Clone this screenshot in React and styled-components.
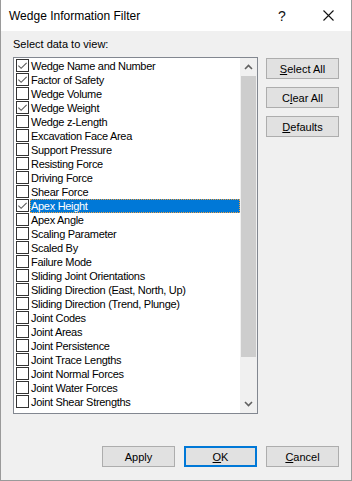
import React, { useState } from "react";
import styled, { createGlobalStyle } from "styled-components";

const items = [
  { id: 0, title: "Wedge Name and Number", checked: true },
  { id: 1, title: "Factor of Safety", checked: true },
  { id: 2, title: "Wedge Volume" },
  { id: 3, title: "Wedge Weight", checked: true },
  { id: 4, title: "Wedge z-Length" },
  { id: 5, title: "Excavation Face Area" },
  { id: 6, title: "Support Pressure" },
  { id: 7, title: "Resisting Force" },
  { id: 8, title: "Driving Force" },
  { id: 9, title: "Shear Force" },
  { id: 10, title: "Apex Height", checked: true },
  { id: 11, title: "Apex Angle" },
  { id: 12, title: "Scaling Parameter" },
  { id: 13, title: "Scaled By" },
  { id: 14, title: "Failure Mode" },
  { id: 15, title: "Sliding Joint Orientations" },
  { id: 16, title: "Sliding Direction (East, North, Up)" },
  { id: 17, title: "Sliding Direction (Trend, Plunge)" },
  { id: 18, title: "Joint Codes" },
  { id: 19, title: "Joint Areas" },
  { id: 20, title: "Joint Persistence" },
  { id: 21, title: "Joint Trace Lengths" },
  { id: 22, title: "Joint Normal Forces" },
  { id: 23, title: "Joint Water Forces" },
  { id: 24, title: "Joint Shear Strengths" },
];

const GlobalStyle = createGlobalStyle`
  html, body {
    margin: 0;
    padding: 0;
    background: #ffffff;
  }
  * {
    box-sizing: border-box;
  }
`;

const App = () => {
  const [list, setList] = useState(items);
  const [selected, setSelected] = useState(10);

  const toggle = (id) => {
    setSelected(id);
    setList((prev) =>
      prev.map((item) =>
        item.id === id ? { ...item, checked: !item.checked } : item
      )
    );
  };

  return (
    <>
      <GlobalStyle />
      <StyledWindow>
        <StyledTitleBar>
          <StyledTitle>Wedge Information Filter</StyledTitle>
          <StyledCaptionButton>?</StyledCaptionButton>
          <StyledCaptionButton>
            <svg width="11" height="11" viewBox="0 0 11 11">
              <path d="M0.5 0.5 L10.5 10.5 M10.5 0.5 L0.5 10.5" stroke="#111" strokeWidth="1.1" fill="none" />
            </svg>
          </StyledCaptionButton>
        </StyledTitleBar>
        <StyledBody>
          <StyledLabel>Select data to view:</StyledLabel>
          <StyledMain>
            <StyledList>
              <StyledRows>
                {list.map((item) => (
                  <StyledRow key={item.id} onClick={() => toggle(item.id)}>
                    <StyledCheck>
                      {item.checked && (
                        <svg width="12" height="12" viewBox="0 0 12 12">
                          <polyline points="1.5,5.5 4.5,8.5 10.5,2.5" stroke="#5a5a5a" strokeWidth="1.2" fill="none" />
                        </svg>
                      )}
                    </StyledCheck>
                    <StyledItemText active={item.id === selected}>
                      {item.title}
                    </StyledItemText>
                  </StyledRow>
                ))}
              </StyledRows>
              <StyledScrollbar>
                <StyledArrow>
                  <svg width="9" height="6" viewBox="0 0 9 6">
                    <polyline points="1,5 4.5,1.5 8,5" stroke="#606060" strokeWidth="1.6" fill="none" />
                  </svg>
                </StyledArrow>
                <StyledTrack>
                  <StyledThumb />
                </StyledTrack>
                <StyledArrow>
                  <svg width="9" height="6" viewBox="0 0 9 6">
                    <polyline points="1,1 4.5,4.5 8,1" stroke="#606060" strokeWidth="1.6" fill="none" />
                  </svg>
                </StyledArrow>
              </StyledScrollbar>
            </StyledList>
            <StyledSide>
              <StyledButton><u>S</u>elect All</StyledButton>
              <StyledButton>C<u>l</u>ear All</StyledButton>
              <StyledButton><u>D</u>efaults</StyledButton>
            </StyledSide>
          </StyledMain>
          <StyledFooter>
            <StyledButton>Apply</StyledButton>
            <StyledButton primary><u>O</u>K</StyledButton>
            <StyledButton><u>C</u>ancel</StyledButton>
          </StyledFooter>
        </StyledBody>
      </StyledWindow>
    </>
  );
};

const StyledWindow = styled.div`
  width: 352px;
  height: 481px;
  display: flex;
  flex-direction: column;
  background: #f0f0f0;
  border: 1px solid #9a9a9a;
  border-top: none;
  font-family: "Liberation Sans", Arial, sans-serif;
  font-size: 11px;
  color: #000;
`;
const StyledTitleBar = styled.div`
  height: 31px;
  flex: none;
  display: flex;
  align-items: center;
  background: #ffffff;
`;
const StyledTitle = styled.div`
  flex: 1;
  padding-left: 8px;
  font-size: 12px;
  color: #000;
`;
const StyledCaptionButton = styled.div`
  width: 46px;
  height: 31px;
  display: flex;
  align-items: center;
  justify-content: center;
  font-size: 14px;
  color: #111;
`;
const StyledBody = styled.div`
  flex: 1;
  display: flex;
  flex-direction: column;
  padding: 7px 12px 13px 12px;
`;
const StyledLabel = styled.div`
  height: 13px;
  line-height: 13px;
  margin-bottom: 6px;
`;
const StyledMain = styled.div`
  display: flex;
  gap: 8px;
`;
const StyledList = styled.div`
  width: 245px;
  height: 357px;
  display: flex;
  background: #ffffff;
  border: 1px solid #828790;
`;
const StyledRows = styled.div`
  flex: 1;
  padding: 1px 0 0 2px;
  overflow: hidden;
`;
const StyledRow = styled.div`
  height: 14px;
  display: flex;
  cursor: default;
`;
const StyledCheck = styled.div`
  width: 13px;
  height: 13px;
  flex: none;
  border: 1px solid #333333;
  background: #ffffff;
  display: flex;
  align-items: center;
  justify-content: center;
`;
const StyledItemText = styled(({ active, ...rest }) => <div {...rest} />)`
  flex: 1;
  height: 14px;
  line-height: 12px;
  margin-left: 1px;
  padding-left: 0;
  white-space: nowrap;
  letter-spacing: -0.3px;
  border: 1px solid transparent;
  ${(props) =>
    props.active &&
    `
      background: #0078d7;
      color: #ffffff;
      border: 1px dotted #f0a040;
  `}
`;
const StyledScrollbar = styled.div`
  width: 17px;
  flex: none;
  display: flex;
  flex-direction: column;
  background: #f0f0f0;
`;
const StyledArrow = styled.div`
  height: 18px;
  display: flex;
  align-items: center;
  justify-content: center;
`;
const StyledTrack = styled.div`
  flex: 1;
  padding: 0 1px;
`;
const StyledThumb = styled.div`
  height: 281px;
  background: #cdcdcd;
`;
const StyledSide = styled.div`
  display: flex;
  flex-direction: column;
  gap: 8px;
  padding-top: 1px;
`;
const StyledButton = styled(({ primary, ...rest }) => <button {...rest} />)`
  width: 73px;
  height: 21px;
  padding: 0;
  background: #e1e1e1;
  border: 1px solid #adadad;
  font-family: "Liberation Sans", Arial, sans-serif;
  font-size: 11px;
  color: #000;

  ${(props) =>
    props.primary &&
    `
      border: 2px solid #0078d7;
  `}
`;
const StyledFooter = styled.div`
  margin-top: auto;
  display: flex;
  justify-content: flex-end;
  gap: 9px;
`;

export default App;
